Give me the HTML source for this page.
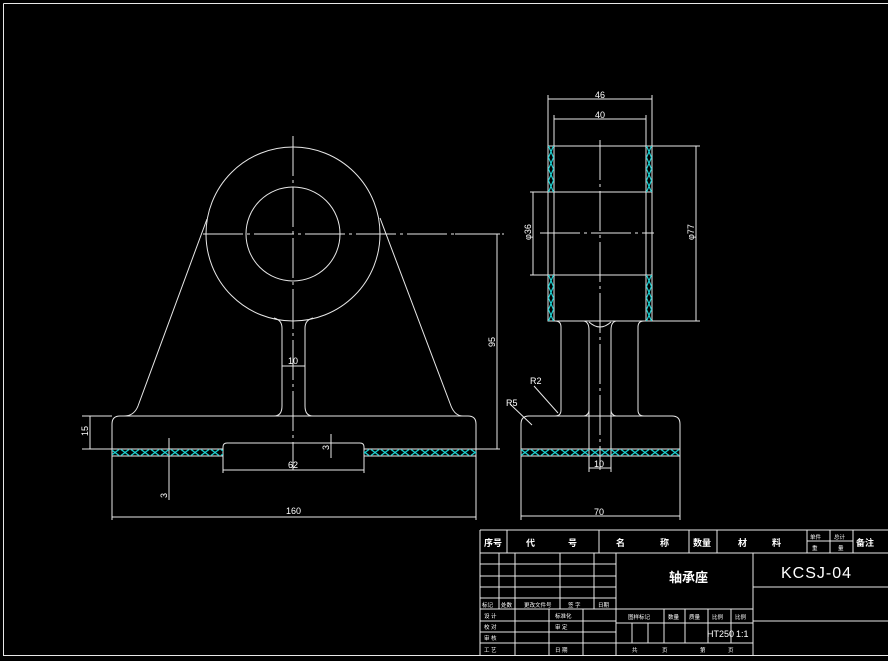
<!DOCTYPE html>
<html><head><meta charset="utf-8"><style>
html,body{margin:0;padding:0;background:#000;width:888px;height:661px;overflow:hidden}
svg{display:block}
text{fill:#fff;font-family:"Liberation Sans","Noto Sans CJK SC",sans-serif}
</style></head><body>
<svg width="888" height="661" viewBox="0 0 888 661" xmlns="http://www.w3.org/2000/svg">
<defs>
<pattern id="hx" x="0" y="449" width="10" height="7" patternUnits="userSpaceOnUse">
<path d="M1 0.5L9 6.5M9 0.5L1 6.5" stroke="#1ccfd0" stroke-width="1.2"/>
</pattern>
</defs>
<g fill="none" stroke="#e8e8e8" stroke-width="1">
<!-- frame -->
<path d="M3.5 3.5H888M3.5 3.5V655.5H888"/>

<!-- LEFT VIEW -->
<circle cx="293" cy="234" r="87"/>
<circle cx="293" cy="234" r="47"/>
<path d="M207 219L138 406Q134 416 124 416H120Q112 416 112 424V456H223V447Q223 443 227 443H360Q364 443 364 447V456H476V424Q476 416 468 416H463Q455 416 451 406L380 218"/>
<path d="M124 416H463"/>
<path d="M274 318Q282 320 282 328V406Q282 416 274 416M313 318Q305 320 305 328V406Q305 416 313 416"/>
<path d="M112 449H223M364 449H476"/>
<!-- centerlines -->
<path d="M293 136V470" stroke-dasharray="40 4 3 4"/>
<path d="M203 234H504" stroke-dasharray="40 4 3 4"/>
<!-- dims -->
<path d="M112 456V520M476 456V520M112 517H476"/>
<path d="M223 456V473M364 456V473M223 470H364"/>
<path d="M82 416H112M82 449H112M90 416V449"/>
<path d="M455 234H500M476 449H500M497 234V449"/>
<path d="M169 438V500"/>
<path d="M331 434V458"/>
<path d="M282 366H305"/>

<!-- RIGHT VIEW -->
<path d="M548 146H652V321H548Z"/>
<path d="M554 146V321M646 146V321" />
<path d="M548 192H652M548 275H652"/>
<path d="M555 321Q561 321 561 327V410Q561 416 555 416H529Q521 416 521 424V456H680V424Q680 416 672 416H644Q638 416 638 410V327Q638 321 644 321"/>
<path d="M555 416H644"/>
<path d="M584 321Q589 322 589 330V472M616 321Q611 322 611 330V472M584 416Q589 415 589 410M616 416Q611 415 611 410"/>
<path d="M589 322Q600 332 611 322"/>
<path d="M521 449H680"/>
<path d="M600 140V470" stroke-dasharray="40 4 3 4"/>
<path d="M540 233H654" stroke-dasharray="40 4 3 4"/>
<!-- dims -->
<path d="M548 95V146M652 95V146M548 99H652"/>
<path d="M554 115V146M646 115V146M554 119H646"/>
<path d="M652 146H700M652 321H700M696 146V321"/>
<path d="M530 192H548M530 275H548M533 192V275"/>
<path d="M589 468H611"/>
<path d="M521 456V520M680 456V520M521 516H680"/>
<path d="M534 386L558 413M510 404L532 425"/>

<!-- TITLE BLOCK -->
<path d="M480 530H888M480 530V655M480 553H888M507 530V553M599 530V553M689 530V553M717 530V553M807 530V553M830 530V553M853 530V553M807 541H853"/>
<path d="M480 564H616M480 576H616M480 587H616M480 598H616M480 609H616M480 621H616M480 632H616M480 643H616"/>
<path d="M499 553V609M515 553V655M560 553V609M594 553V609M616 553V655M549 609V655M583 609V655"/>
<path d="M753 553V655M753 587H888M753 621H888"/>
<path d="M616 609H753M616 623H753M616 643H753M664 609V643M685 609V643M708 609V643M731 609V643M632 623V643M648 623V643"/>
</g>
<!-- hatching -->
<rect x="112" y="449" width="111" height="7" fill="url(#hx)"/>
<rect x="364" y="449" width="112" height="7" fill="url(#hx)"/>
<rect x="521" y="449" width="159" height="7" fill="url(#hx)"/>
<g stroke="#1ccfd0" stroke-width="1.2" fill="none">
<path d="M548.5 146L553.5 157.5M553.5 146L548.5 157.5M548.5 157.5L553.5 169M553.5 157.5L548.5 169M548.5 169L553.5 180.5M553.5 169L548.5 180.5M548.5 180.5L553.5 192M553.5 180.5L548.5 192"/>
<path d="M548.5 275L553.5 286.5M553.5 275L548.5 286.5M548.5 286.5L553.5 298M553.5 286.5L548.5 298M548.5 298L553.5 309.5M553.5 298L548.5 309.5M548.5 309.5L553.5 321M553.5 309.5L548.5 321"/>
<path d="M646.5 146L651.5 157.5M651.5 146L646.5 157.5M646.5 157.5L651.5 169M651.5 157.5L646.5 169M646.5 169L651.5 180.5M651.5 169L646.5 180.5M646.5 180.5L651.5 192M651.5 180.5L646.5 192"/>
<path d="M646.5 275L651.5 286.5M651.5 275L646.5 286.5M646.5 286.5L651.5 298M651.5 286.5L646.5 298M646.5 298L651.5 309.5M651.5 298L646.5 309.5M646.5 309.5L651.5 321M651.5 309.5L646.5 321"/>
</g>

<!-- dim text -->
<g font-size="9">
<text x="286" y="514">160</text>
<text x="288" y="468">62</text>
<text x="288" y="364">10</text>
<text x="594" y="515">70</text>
<text x="594" y="467">10</text>
<text x="595" y="98">46</text>
<text x="595" y="118">40</text>
<text x="530" y="384">R2</text>
<text x="506" y="406">R5</text>
<text transform="translate(88 436) rotate(-90)">15</text>
<text transform="translate(495 347) rotate(-90)">95</text>
<text transform="translate(694 240) rotate(-90)">φ77</text>
<text transform="translate(531 240) rotate(-90)">φ36</text>
<text transform="translate(167 498) rotate(-90)">3</text>
<text transform="translate(329 450) rotate(-90)">3</text>
</g>
<!-- title block text -->
<g font-size="9" font-weight="bold">
<text x="484" y="546">序号</text>
<text x="526" y="546">代</text><text x="568" y="546">号</text>
<text x="616" y="546">名</text><text x="660" y="546">称</text>
<text x="693" y="546">数量</text>
<text x="738" y="546">材</text><text x="772" y="546">料</text>
<text x="856" y="546">备注</text>
</g>
<g font-size="5.5">
<text x="810" y="539">单件</text><text x="834" y="539">总计</text>
<text x="812" y="550">重</text><text x="838" y="550">量</text>
<text x="482" y="607">标记</text><text x="501" y="607">处数</text><text x="524" y="607">更改文件号</text><text x="568" y="607">签 字</text><text x="598" y="607">日期</text>
<text x="484" y="618">设 计</text><text x="555" y="618">标准化</text>
<text x="484" y="629">校 对</text><text x="555" y="629">审 定</text>
<text x="484" y="640">审 核</text>
<text x="484" y="652">工 艺</text><text x="555" y="652">日 期</text>
<text x="628" y="619">图样标记</text><text x="668" y="619">数量</text><text x="689" y="619">质量</text><text x="712" y="619">比例</text><text x="735" y="619">比例</text>
<text x="632" y="652">共</text><text x="662" y="652">页</text><text x="700" y="652">第</text><text x="728" y="652">页</text>
</g>
<text x="707" y="637" font-size="9">HT250</text>
<text x="736" y="637" font-size="9">1:1</text>
<text x="669" y="582" font-size="13" font-weight="bold">轴承座</text>
<text x="781" y="578" font-size="16" letter-spacing="1" fill="#ddd">KCSJ-04</text>
</svg>
</body></html>
